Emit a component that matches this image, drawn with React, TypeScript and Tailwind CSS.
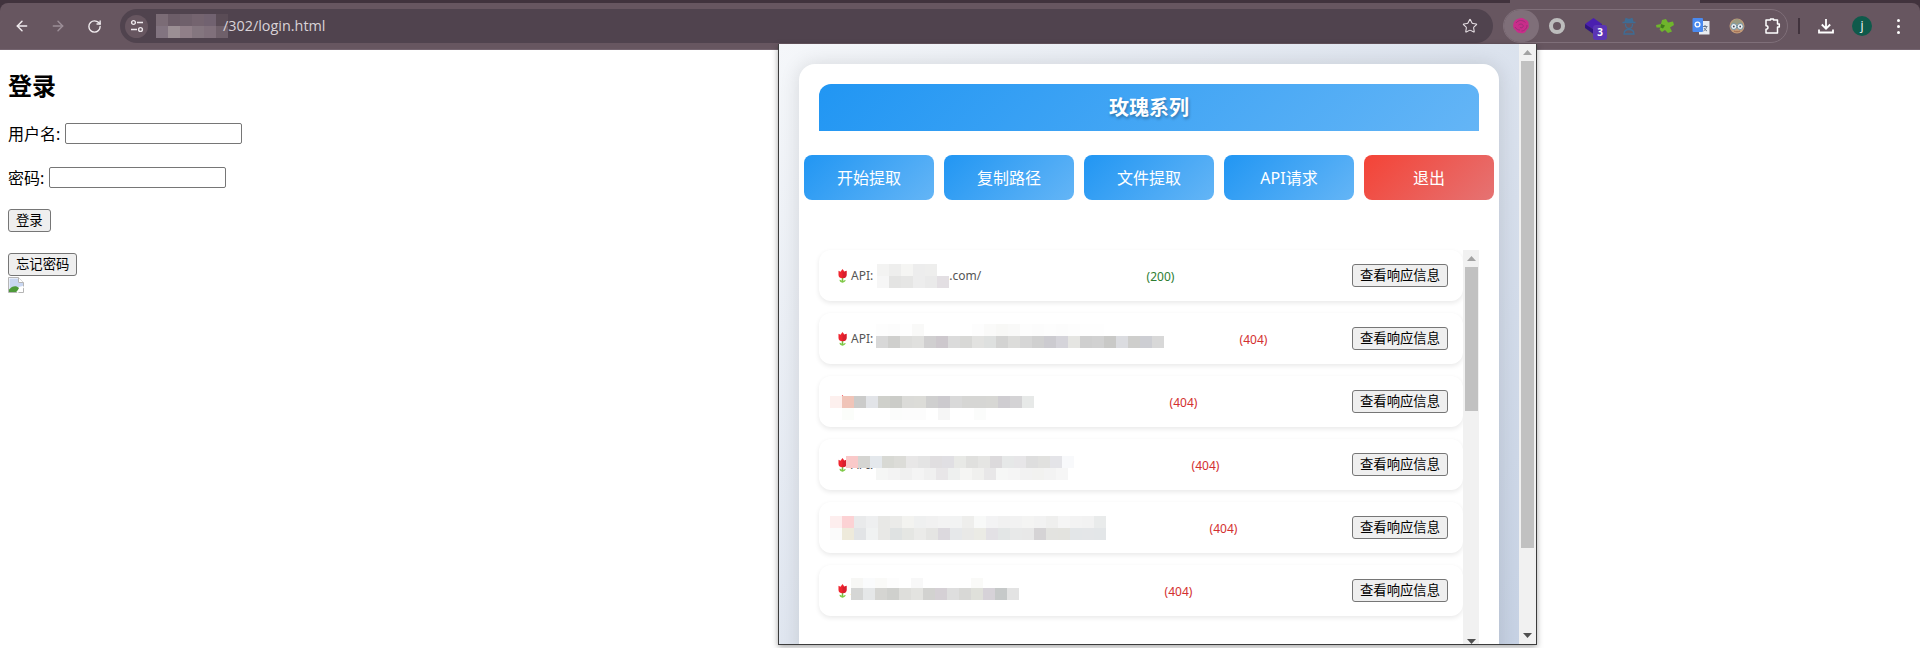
import { ArrowLeft, ArrowRight, RotateCw, Star } from 'lucide-react';

const CJK = '[font-family:"Noto_Sans","Noto_Sans_CJK_SC",sans-serif]';

type Band = { x?: number; h?: number; cells: string[] };

function Mosaic({ bands }: { bands: Band[] }) {
  return (
    <div className="flex flex-col">
      {bands.map((band, i) => (
        <div key={i} className="flex" style={{ marginLeft: band.x ?? 0 }}>
          {band.cells.map((c, j) => (
            <div key={j} className="w-3 shrink-0" style={{ height: band.h ?? 12, backgroundColor: `#${c}` }} />
          ))}
        </div>
      ))}
    </div>
  );
}

function Tulip() {
  return (
    <svg width="9" height="14" viewBox="0 0 9 14" className="block shrink-0">
      <path d="M4.500 8.500v5" stroke="#79c043" strokeWidth="1.500" />
      <path d="M4.500 13.500C2.300 13.500 1.500 12 1.500 10.700c1.800 0 3 1 3 2.800zM4.500 13.500c1.900 0 3-1 3.200-2.500-1.900 0-3.200 1-3.200 2.500z" fill="#84cc4e" />
      <path d="M.5 1.800 2.500 2.800 4.500 0 6.500 2.800 8.500 1.800V6C8.500 8.300 6.700 9.300 4.500 9.300S.5 8.300.5 6z" fill="#f0252f" />
      <path d="M4.500 3 6.500 2.800 8.500 1.800V6C8.500 8.300 6.700 9.300 4.500 9.300z" fill="#d81f2e" />
    </svg>
  );
}

function ScrollArrow({ up, className }: { up?: boolean; className: string }) {
  return (
    <div className="h-[17px] w-full flex items-center justify-center shrink-0">
      <svg width="9" height="5" viewBox="0 0 9 5" className={className}>
        <path d={up ? 'M4.500 0 9 5H0z' : 'M0 0h9L4.500 5z'} fill="currentColor" />
      </svg>
    </div>
  );
}

function ScrollBar({ thumb, width }: { thumb: number; width: string }) {
  return (
    <div className={`${width} shrink-0 h-full bg-[#f1f1f1] flex flex-col items-center`}>
      <ScrollArrow up className="text-[#a3a3a3]" />
      <div className="w-[13px] bg-[#c1c1c1]" style={{ height: thumb }} />
      <div className="mt-auto w-full">
        <ScrollArrow className="text-[#505050]" />
      </div>
    </div>
  );
}

type Row = { width: number; code: 200 | 404; mosaicX: number; mosaicY: number; bands: Band[]; tail?: boolean };

const rows: Row[] = [
  {
    width: 145, code: 200, mosaicX: 43, mosaicY: 14, tail: true,
    bands: [
      { cells: ['f3f3f2', 'eeeeed', 'f5f5f3', 'ededed', 'eeeeed'] },
      { cells: ['f6f6f6', 'e4e4e3', 'e6e6e5', 'ededed', 'eaeaea', 'e3dfe3'] },
    ],
  },
  {
    width: 331, code: 404, mosaicX: 42, mosaicY: 11,
    bands: [
      { cells: ['fdfdfd', 'fcfcfc', 'fefefe', 'f9f9f8', 'ffffff', 'ffffff', 'ffffff', 'ffffff', 'fdfdfd', 'fafaf9', 'f8f8f6', 'f9f9f8', 'fdfdfd', 'fcfcfc', 'fdfdfd', 'fcfcfc', 'fdfdfd', 'fefefe', 'fefefe'] },
      { cells: ['d8d8d8', 'cfcfcd', 'dddddb', 'e0e0de', 'd0cfd0', 'cdc8cd', 'dbdbdb', 'd8d8d6', 'e2e2e0', 'dee0df', 'd3d3d2', 'dcdcda', 'd6d6d6', 'd0d0d0', 'cccbd0', 'd5d4da', 'e5e5e2', 'cfcfcf', 'd1d1d1', 'c9c9c7', 'dbdce0', 'cececc', 'cdced3', 'd8d8d8'] },
    ],
  },
  {
    width: 191, code: 404, mosaicX: -4, mosaicY: 20,
    bands: [
      { cells: ['fdf0ee', 'f0c4b8', 'cbcbca', 'e2e4e8', 'cfd0cb', 'cbccc8', 'dbdbd8', 'dcdcd8', 'cfcfcf', 'cccace', 'd9d9d9', 'd6d6d4', 'd6d6d4', 'd7d7d4', 'cfcdd1', 'd4d3d5', 'e7e9e8'] },
      { cells: ['ffffff', 'fbfdfa', 'ffffff', 'ffffff', 'ffffff', 'fbfcfb', 'fcfcfc', 'fcfcfc', 'ffffff', 'f6f6f6', 'ffffff', 'ffffff', 'fbfcfb'] },
    ],
  },
  {
    width: 235, code: 404, mosaicX: 12, mosaicY: 17,
    bands: [
      { cells: ['f9c9c9', 'd5d5d2', 'e4e8ec', 'd8d9d4', 'dcdcd8', 'e8e7e7', 'e4e4e4', 'e0dee0', 'e0dfe3', 'e8e9e6', 'e0e0de', 'e5e5e3', 'dcdadc', 'e6e8e8', 'e7e6e8', 'dedede', 'e1e1df', 'e4e4e8', 'f8f9fb'] },
      { x: 30, cells: ['f5f6f5', 'f3f3f3', 'f0f0f0', 'f4f4f4', 'f0f0f0', 'e8e6e8', 'eef0ef', 'f5f5f3', 'f0f0ee', 'e8e7e8', 'f6f7f6', 'f5f5f5', 'f2f2f2', 'f2f2f0', 'f3f3f3', 'f6f6f6'] },
    ],
  },
  {
    width: 271, code: 404, mosaicX: -4, mosaicY: 14,
    bands: [
      { cells: ['fdeeee', 'fcd2d4', 'e9eaeb', 'eeeff0', 'e8e8e6', 'ebebe9', 'f3f3f0', 'eff0f0', 'f1f1f1', 'f3f3f3', 'f2f3f3', 'eeeeec', 'f8f9f8', 'f3f3f4', 'f1f1f1', 'f2f2f2', 'f4f4f3', 'f2f2f2', 'efefee', 'f5f5f5', 'f3f3f3', 'f2f2f2', 'e9ebeb'] },
      { cells: ['fbfbfb', 'eeeadb', 'e2e4e6', 'f0f2f2', 'e8e8e6', 'dfe2e2', 'e5e6e3', 'ebebe9', 'e5e5e3', 'dcd9de', 'e6e8ea', 'e9e9e7', 'ebebe5', 'e3e1e5', 'e3e6e6', 'e8e9e9', 'e8e8e8', 'd5d3d5', 'e3e3e0', 'e3e3df', 'e3e6e8', 'e4e6e8', 'e3e6e8'] },
    ],
  },
  {
    width: 181, code: 404, mosaicX: 17, mosaicY: 13,
    bands: [
      { h: 10, cells: ['f7f7f5', 'fafbfc', 'fafaf8', 'fdfdfd', 'ffffff', 'f8f8f8', 'ffffff', 'ffffff', 'ffffff', 'ffffff', 'fafaf8'] },
      { cells: ['d5d6d5', 'e5e7e8', 'd5d5d2', 'cfd0cd', 'dededb', 'e3e3e0', 'd2d2d0', 'd5d0d5', 'dedede', 'd8d8d6', 'dfe0da', 'd6d2d8', 'c6c9c9', 'e3e3e3'] },
    ],
  },
];

function ApiRow({ row }: { row: Row }) {
  return (
    <div className={`h-[51px] shrink-0 rounded-xl bg-white px-[15px] flex items-center justify-between shadow-[0_2px_5px_rgba(0,0,0,0.09)] text-xs ${CJK}`}>
      <div className="relative h-full flex items-center shrink-0" style={{ width: row.width }}>
        <span className="ml-1 mr-1"><Tulip /></span>
        <span className="pt-px text-[#555555] whitespace-nowrap">API:</span>
        {row.tail && <span className="ml-[76px] pt-px text-[#555555]">.com/</span>}
        <div className="absolute" style={{ left: row.mosaicX, top: row.mosaicY }}>
          <Mosaic bands={row.bands} />
        </div>
      </div>
      <span className={`mr-[10px] pt-[2px] ${row.code === 200 ? 'text-[#2e7d32]' : 'text-[#d32f2f]'}`}>({row.code})</span>
      <button className={`w-24 h-[23px] shrink-0 rounded-[3px] border border-[#767676] bg-[#efefef] text-[13.33px] leading-none text-black ${CJK}`}>查看响应信息</button>
    </div>
  );
}

function Popup() {
  const blue = 'bg-[linear-gradient(135deg,#2196f3,#64b5f6)]';
  const actions = ['开始提取', '复制路径', '文件提取', 'API请求'];
  return (
    <div className="absolute left-[778px] top-[44px] w-[759px] h-[601px] flex bg-white border-x border-b border-[#3c3c3c] shadow-[0_2px_6px_rgba(0,0,0,0.35)]">
      <div className="flex-1 min-w-0 overflow-hidden">
        <div className="h-[695px] p-5 bg-[linear-gradient(135deg,#f5f7fa,#c3cfe2)]">
          <div className="h-full rounded-2xl bg-white p-5 shadow-[0_0_20px_rgba(0,0,0,0.12)]">
            <div className={`h-[47px] rounded-t-xl ${blue} flex items-center justify-center text-xl font-bold text-white [text-shadow:1px_2px_3px_rgba(0,0,0,0.3)] ${CJK}`}>玫瑰系列</div>
            <div className="-mx-[15px] mt-6 grid grid-cols-5 gap-[10px]">
              {actions.map(a => (
                <button key={a} className={`h-[45px] rounded-lg ${blue} text-white text-base ${CJK}`}>{a}</button>
              ))}
              <button className={`h-[45px] rounded-lg bg-[linear-gradient(135deg,#f44336,#e57373)] text-white text-base ${CJK}`}>退出</button>
            </div>
            <div className="mt-[50px] h-[400px] flex">
              <div className="flex-1 min-w-0 flex flex-col gap-3">
                {rows.map((r, i) => <ApiRow key={i} row={r} />)}
              </div>
              <ScrollBar thumb={144} width="w-4" />
            </div>
          </div>
        </div>
      </div>
      <ScrollBar thumb={487} width="w-[17px]" />
    </div>
  );
}

function TuneIcon() {
  return (
    <svg width="14" height="14" viewBox="0 0 14 14" fill="none" stroke="#efe9ed" strokeWidth="1.400">
      <circle cx="3.500" cy="3.500" r="1.900" />
      <path d="M7 3.500h6M1 10.500h6" />
      <circle cx="10.500" cy="10.500" r="1.900" />
    </svg>
  );
}

function Rose() {
  return (
    <svg width="18" height="18" viewBox="0 0 18 18">
      <path d="M7 1.500C9 .5 12 1 13 2.500c2.500.5 4 2.500 3.500 5 1 2-.5 4.500-2 5.500-.5 2.500-3.500 4-6 3-2 .5-4-1-5-3C1.500 12 .5 9 1.500 7 1.500 4.500 4 2 7 1.500z" fill="#c92d8a" />
      <path d="M4 6c2-3 6.500-3.500 9.500-.5M3 10c1.300 2.300 3.200 3 5 3M15 8c.3 3-2.500 6-5.500 6M6.500 8c1.500-1.500 4-1.300 4.700.5.500 1.700-1.500 3-3.300 2" fill="none" stroke="#9c2f78" strokeWidth="1" />
    </svg>
  );
}

function Cube() {
  return (
    <svg width="17" height="16" viewBox="0 0 17 16">
      <path d="M8.500 0 17 6 8.500 11.500 0 6z" fill="#4a1fb0" />
      <path d="M0 6v4l8.500 6V11.500z" fill="#2f1480" />
      <path d="M17 6v4L8.500 16V11.500z" fill="#3a189a" />
    </svg>
  );
}

function Spy() {
  return (
    <svg width="16" height="18" viewBox="0 0 16 18" fill="none" stroke="#3f6c94" strokeWidth="1.300">
      <path d="M4 5 5 1.500 8 2.500 11 1.500 12 5z" fill="#3f6c94" />
      <path d="M1.500 5.500h13" />
      <path d="M4.500 7c0 3 1.500 4.500 3.500 4.500S11.500 10 11.500 7" />
      <path d="M3 17c0-3 2-4.500 5-4.500s5 1.500 5 4.500z" />
    </svg>
  );
}

function GreenBlob() {
  return (
    <svg width="18" height="15" viewBox="0 0 18 15">
      <path d="M0 6 5 5 6 1 10 0 12 3.500 17 2.500 18 6 14 8.500 16 12.500 12 14 9 11 6 13 3.500 10.500 4.500 8.500 0.500 8.500z" fill="#6fb52c" />
      <path d="M5 5 9 6.500 7 9.500 4.500 8.500z" fill="#3f7d1a" />
    </svg>
  );
}

function Translate() {
  return (
    <svg width="18" height="17" viewBox="0 0 18 17">
      <rect x="7" y="3" width="10.500" height="13.500" fill="#e8ecf2" />
      <rect x="0.500" y="0" width="10.500" height="14" rx="1" fill="#4a8af0" />
      <circle cx="5.500" cy="6.500" r="2.400" fill="none" stroke="#fff" strokeWidth="1.300" />
      <path d="M11 8.500h4.500M13 7v1.500M14.500 9c-.5 2-1.800 3.500-3 4M12 10c.6 1.200 1.600 2.500 3 3" stroke="#5a6b80" strokeWidth="0.900" fill="none" />
    </svg>
  );
}

function Owl() {
  return (
    <svg width="16" height="16" viewBox="0 0 16 16">
      <circle cx="8" cy="8" r="7.500" fill="#c29a78" />
      <path d="M2 6c1-3 3.500-5 6-5s5 2 6 5z" fill="#9a9a80" />
      <circle cx="4.800" cy="8.500" r="3" fill="#eef2f3" stroke="#6f93a3" />
      <circle cx="11.200" cy="8.500" r="3" fill="#eef2f3" stroke="#6f93a3" />
      <circle cx="4.800" cy="8.500" r=".9" fill="#445" />
      <circle cx="11.200" cy="8.500" r=".9" fill="#445" />
      <path d="M5 13c1.500 1 4.500 1 6 0" stroke="#a06a50" fill="none" />
    </svg>
  );
}

function PuzzleIcon() {
  return (
    <svg width="16" height="16" viewBox="0 0 16 16" fill="none" stroke="#fff" strokeWidth="1.500" strokeLinejoin="round">
      <path d="M1 2h4.500V.9h3V2H12.500v4h1.800v3h-1.800v6H1v-3.800c1.300 0 2-.7 2-1.700S2.300 7.800 1 7.800z" />
    </svg>
  );
}

function DownloadIcon() {
  return (
    <svg width="16" height="16" viewBox="0 0 16 16" fill="none" stroke="#fff" strokeWidth="1.800">
      <path d="M8 1v9.500M3.800 6.500 8 10.700l4.200-4.200M1 11.500v3h14v-3" />
    </svg>
  );
}

function Toolbar() {
  const ext = 'w-9 shrink-0 flex items-center justify-center';
  return (
    <div className="bg-[#41333d]">
      <div className="h-[3px] flex">
        <div className="w-[1510px] bg-[#41333d]" />
        <div className="w-[190px] bg-[#675660]" />
      </div>
      <div className="h-[46px] rounded-t-lg bg-[#675660] flex items-center pl-1 pr-1">
        <div className="w-9 flex justify-center text-[#f1ecef]"><ArrowLeft size={16} strokeWidth={2.2} /></div>
        <div className="w-9 flex justify-center text-[#9c8e97]"><ArrowRight size={16} strokeWidth={2.2} /></div>
        <div className="w-9 flex justify-center text-[#f1ecef]"><RotateCw size={15} strokeWidth={2.2} /></div>
        <div className="ml-2 flex-1 h-[34px] rounded-full bg-[#50434e] flex items-center">
          <div className="ml-[5px] w-[23px] h-[23px] rounded-full bg-[#675660] flex items-center justify-center"><TuneIcon /></div>
          <div className="ml-2">
            <Mosaic bands={[
              { cells: ['7b6c76', '6c5d68', '6f606b', '74646f', '716270', '5a4c56'] },
              { cells: ['827480', '9b8f94', '907f88', '84767f', '80707b', '6f606a'] },
            ]} />
          </div>
          <span className="ml-[-5px] text-[14.4px] text-[#d9d2d7] font-['Open_Sans',sans-serif]">/302/login.html</span>
          <div className="ml-auto mr-[15px] text-[#e6dfe4]"><Star size={16} strokeWidth={1.6} /></div>
        </div>
        <div className="ml-[10px] w-[285px] h-[34px] rounded-full border border-[#7f6f79] flex items-center overflow-hidden">
          <div className={`${ext} h-full -ml-px rounded-full bg-[#7f6f79]`}><Rose /></div>
          <div className={ext}><div className="w-4 h-4 rounded-full border-4 border-[#bdbdbd]" /></div>
          <div className={`${ext} relative h-4`}>
            <Cube />
            <span className="absolute left-[18px] top-[7px] w-[14px] h-[15px] rounded-[3px] bg-[#5b35b5] text-white text-[10px] font-bold leading-[15px] text-center font-['Open_Sans',sans-serif]">3</span>
          </div>
          <div className={ext}><Spy /></div>
          <div className={ext}><GreenBlob /></div>
          <div className={ext}><Translate /></div>
          <div className={ext}><Owl /></div>
          <div className={ext}><PuzzleIcon /></div>
        </div>
        <div className="ml-[10px] mr-2 w-[2px] h-4 bg-[#41333d]" />
        <div className={ext}><DownloadIcon /></div>
        <div className={ext}>
          <div className="w-5 h-5 rounded-full bg-[#0f5a4b] text-white text-xs leading-5 text-center font-['Open_Sans',sans-serif]">j</div>
        </div>
        <div className={`${ext} flex-col gap-[3px]`}>
          <div className="w-[3px] h-[3px] rounded-full bg-white" />
          <div className="w-[3px] h-[3px] rounded-full bg-white" />
          <div className="w-[3px] h-[3px] rounded-full bg-white" />
        </div>
      </div>
      <div className="h-px bg-[#756570]" />
    </div>
  );
}

function BrokenImage() {
  return (
    <svg width="16" height="16" viewBox="0 0 16 16" className="mt-px block">
      <path d="M0.500 0.500H10.500L15.500 5.500V15.500H0.500z" fill="#fff" stroke="#b5b5b5" />
      <path d="M1.500 1.500H10V6H15V9L1.500 12z" fill="#c9d7f2" />
      <path d="M1 15V12.500C4 9 8 8 11 11L9 15z" fill="#4e9a3a" />
      <path d="M10.500 0.500V5.500H15.500" fill="#fff" stroke="#b5b5b5" />
      <path d="M9 15.500 15.500 9.500" stroke="#fff" strokeWidth="2" />
    </svg>
  );
}

function Login() {
  const input = 'w-[177px] h-[21px] rounded-[2px] border border-[#767676] bg-white';
  const btn = `block h-[23px] rounded-[3px] border border-[#767676] bg-[#efefef] px-[7px] text-[13.33px] leading-none text-black ${CJK}`;
  return (
    <div className={`px-2 pt-5 text-black text-base ${CJK}`}>
      <h2 className="text-2xl font-bold leading-8">登录</h2>
      <div className="mt-[21px] flex items-center gap-[5px] h-[21px]">
        <label>用户名:</label>
        <input className={input} />
      </div>
      <div className="mt-[23px] flex items-center gap-[5px] h-[21px]">
        <label>密码:</label>
        <input className={input} />
      </div>
      <button className={`${btn} mt-[21px]`}>登录</button>
      <button className={`${btn} mt-[21px]`}>忘记密码</button>
      <BrokenImage />
    </div>
  );
}

export default function App() {
  return (
    <div className="relative w-full h-[648px] overflow-hidden bg-white">
      <Toolbar />
      <Login />
      <Popup />
    </div>
  );
}
